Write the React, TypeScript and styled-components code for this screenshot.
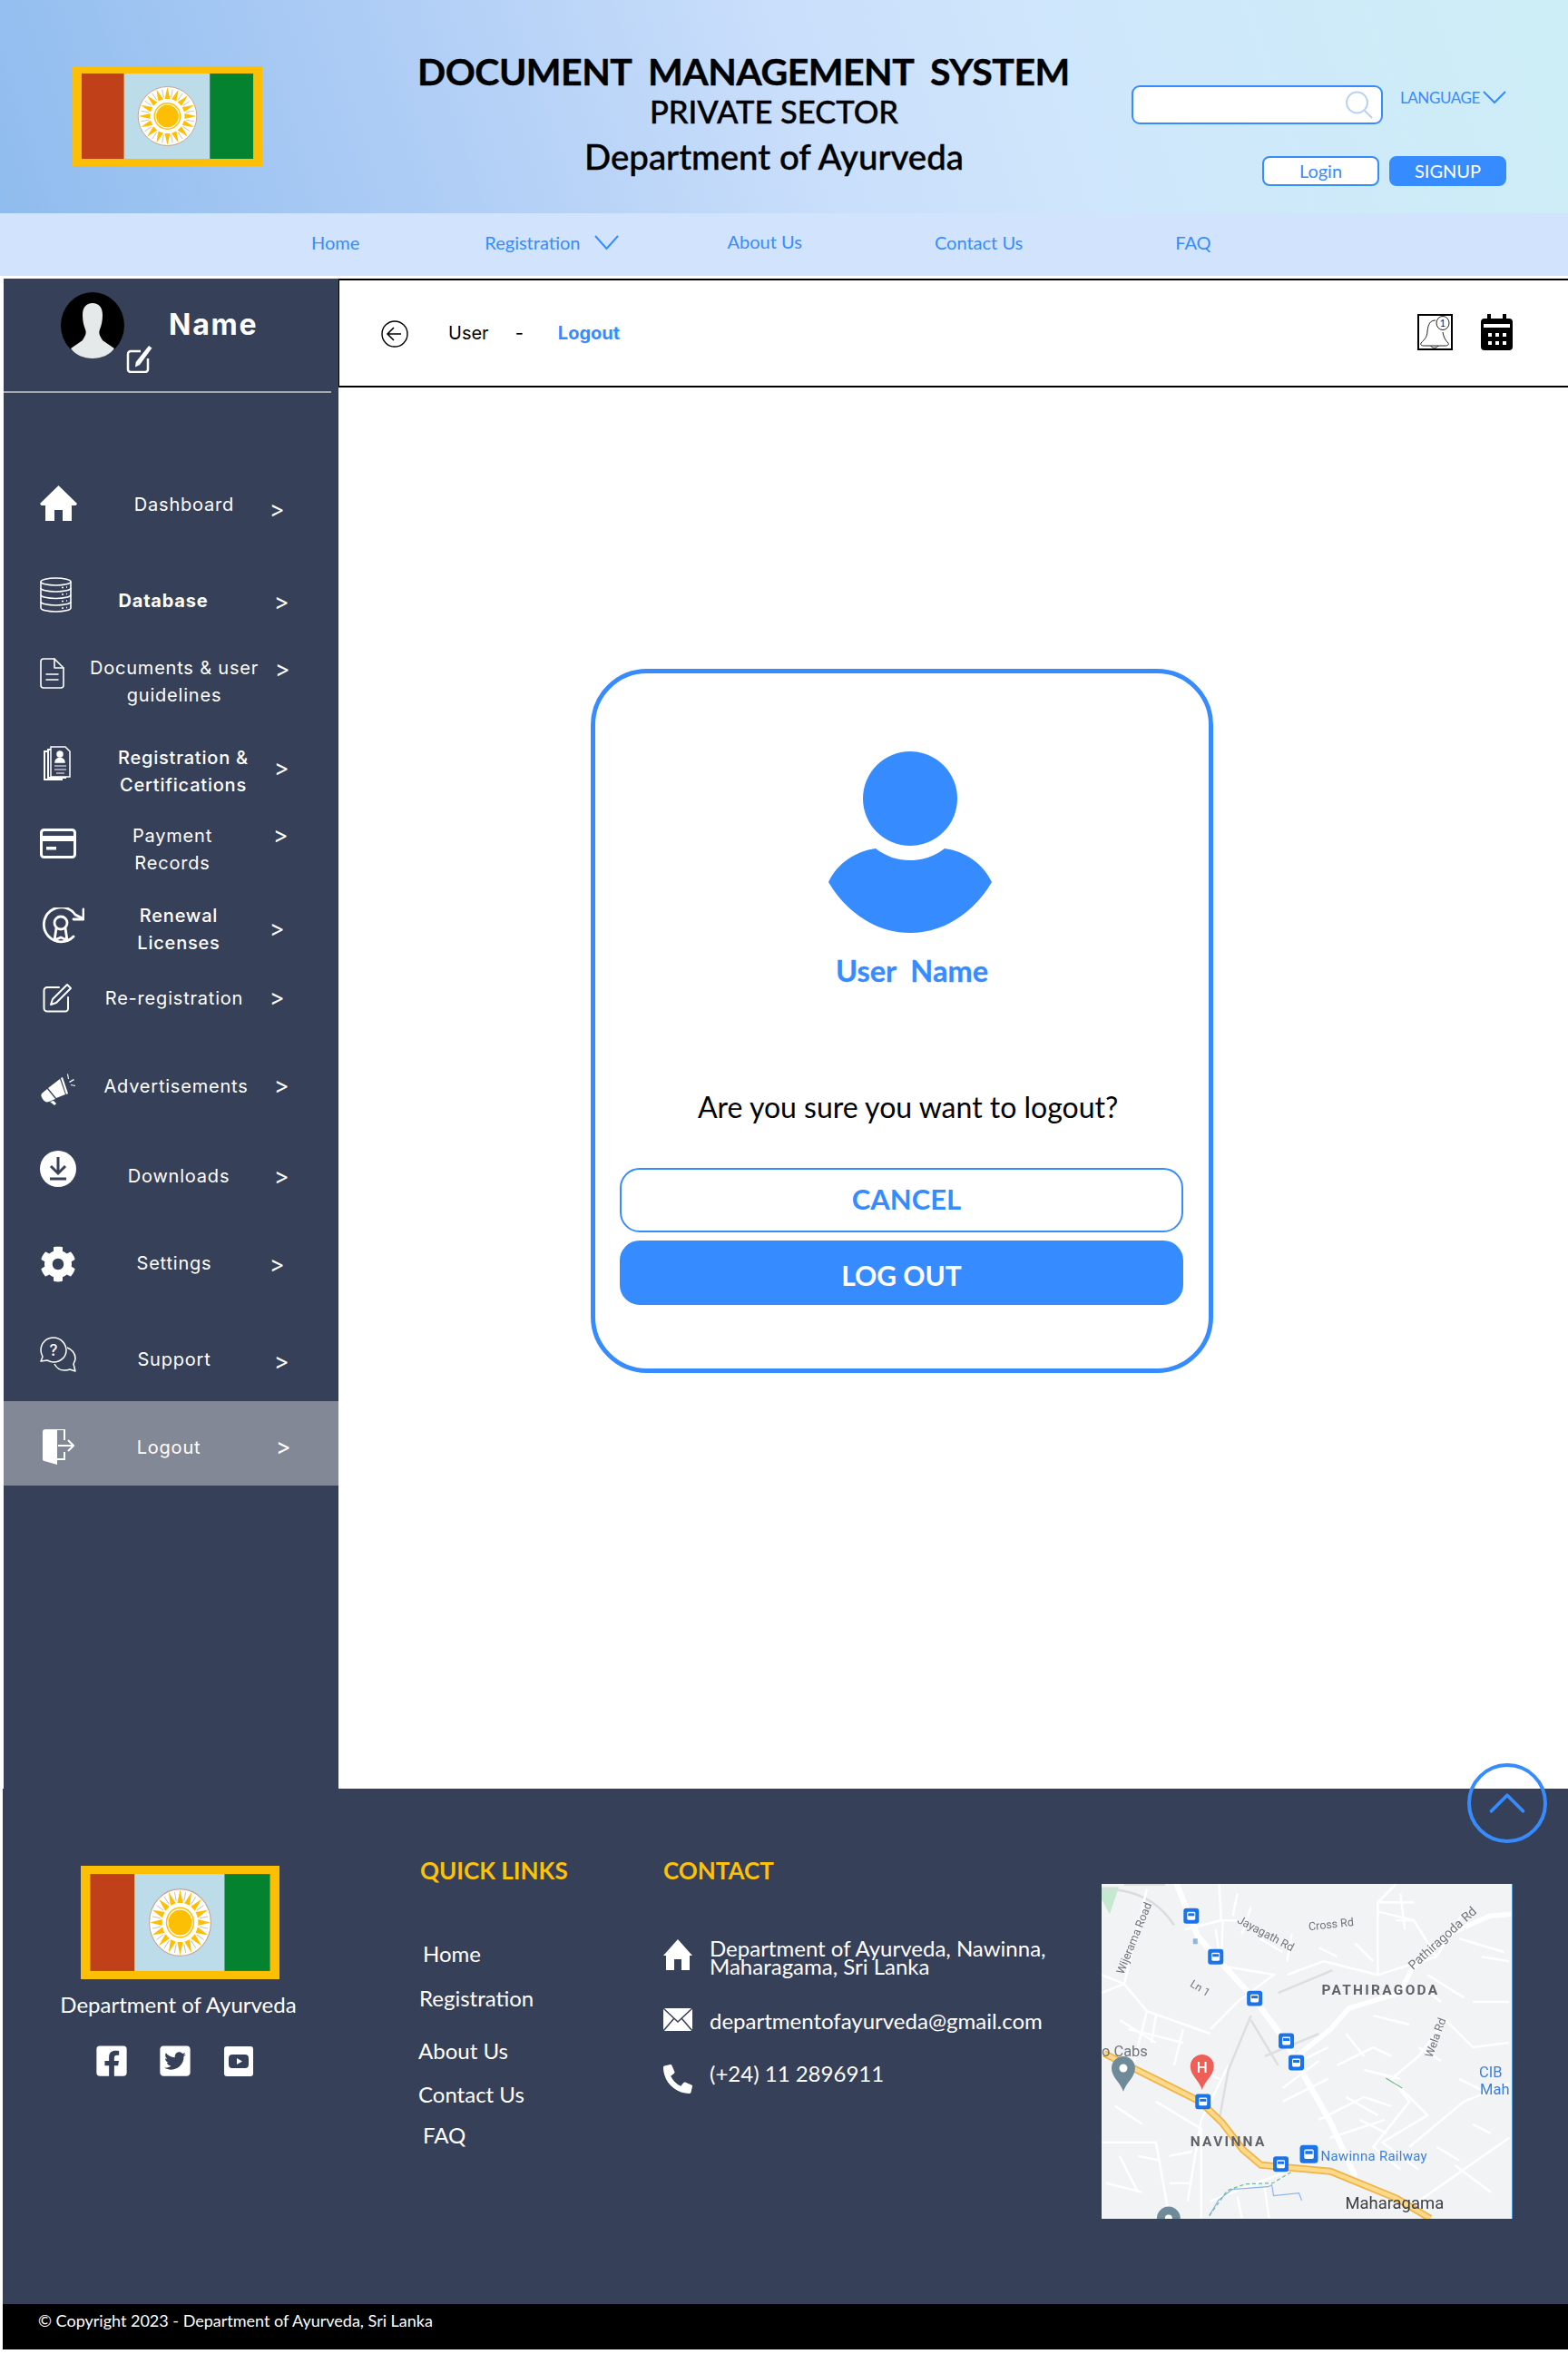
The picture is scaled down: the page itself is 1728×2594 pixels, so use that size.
import React from 'react';
import styled, { createGlobalStyle } from 'styled-components';
import { FaCog, FaFacebookSquare, FaPhoneAlt, FaTwitterSquare } from 'react-icons/fa';
import { FiChevronUp } from 'react-icons/fi';

const BLUE = '#368cff';
const NAVY = '#364059';

const GlobalStyle = createGlobalStyle`
  html, body { margin: 0; padding: 0; background: #ffffff; }
  body { font-family: 'Lato', 'Liberation Sans', sans-serif; }
  * { box-sizing: border-box; }
`;

const Page = styled.div`
  width: 1728px;
  height: 2594px;
  overflow: hidden;
`;

/* header */
const Header = styled.header`
  display: flex;
  height: 235px;
  background: linear-gradient(72deg, #8fbcee 0%, #b2cff6 30%, #cadffb 52%, #cfe7fb 70%, #cdeef6 100%);
`;

const FlagSlot = styled.div`
  margin: 73px 0 0 80px;
  width: 209px;
  height: 110px;
`;

const TitleBlock = styled.div`
  margin: 57px 0 0 171px;
  width: 786px;
  color: #000000;
  text-align: center;
`;

const TitleLine = styled.div<{ $size: number; $weight: number; $shift?: number; $top?: number; $track?: number }>`
  margin-top: ${(p) => p.$top ?? 0}px;
  margin-right: ${(p) => p.$shift ?? 0}px;
  font-size: ${(p) => p.$size}px;
  font-weight: ${(p) => p.$weight};
  letter-spacing: ${(p) => p.$track ?? 0}px;
  line-height: 44px;
  white-space: pre;
  -webkit-text-stroke: 0.4px #000000;
`;

const HeaderRight = styled.div`
  margin: 94px 0 0 1px;
  width: 413px;
`;

const SearchRow = styled.div`
  display: flex;
`;

const SearchBox = styled.div`
  display: flex;
  align-items: center;
  justify-content: flex-end;
  width: 278px;
  height: 43px;
  padding-right: 8px;
  border: 2px solid ${BLUE};
  border-radius: 9px;
  background: #ffffff;
  color: #b7d2f4;
`;

const LanguageLink = styled.div`
  display: flex;
  align-items: center;
  gap: 3px;
  height: 20px;
  margin: 3px 0 0 19px;
  color: ${BLUE};
  font-size: 17px;
  letter-spacing: -0.4px;
`;

const AuthRow = styled.div`
  display: flex;
  justify-content: flex-end;
  gap: 11px;
  margin-top: 35px;
`;

const AuthButton = styled.button<{ $filled?: boolean }>`
  width: 129px;
  height: 33px;
  padding: 0 0 2px;
  border: 2px solid ${BLUE};
  border-radius: 8px;
  background: ${(p) => (p.$filled ? BLUE : '#ffffff')};
  color: ${(p) => (p.$filled ? '#ffffff' : BLUE)};
  font-family: inherit;
  font-size: 20px;
  line-height: 1;
`;

/* top nav */
const TopNav = styled.nav`
  display: flex;
  align-items: center;
  height: 69px;
  padding: 0 0 5px 343px;
  background: #d2e4fd;
  color: ${BLUE};
  font-size: 20px;
`;

const TopNavItem = styled.a<{ $gap?: number; $lift?: number }>`
  display: flex;
  align-items: center;
  margin-left: ${(p) => p.$gap ?? 0}px;
  margin-bottom: ${(p) => p.$lift ?? 0}px;
`;

const TopNavCaret = styled.span`
  display: flex;
  margin-left: 15px;
`;

/* body */
const Workspace = styled.div`
  display: flex;
  height: 1664px;
  margin-top: 3px;
  padding-left: 4px;
`;

const Sidebar = styled.aside`
  flex: 0 0 369px;
  background: ${NAVY};
  color: #ffffff;
`;

const Profile = styled.div`
  display: flex;
  height: 124px;
  margin-right: 8px;
  padding: 15px 0 0 63px;
`;

const AvatarOval = styled.div`
  width: 70px;
  height: 73px;
`;

const AvatarEdit = styled.span`
  display: flex;
  height: 30px;
  margin: 59px 0 0 2px;
`;

const ProfileName = styled.div`
  margin: 16px 0 0 18px;
  font-family: 'Inter', 'Liberation Sans', sans-serif;
  font-size: 32px;
  font-weight: 700;
  letter-spacing: 1.8px;
  line-height: 40px;
`;

const ProfileRule = styled.hr`
  width: 361px;
  height: 2px;
  margin: 0 0 87px;
  border: 0;
  background: #a6a9b2;
`;

const SideRow = styled.a<{ $h: number; $active?: boolean }>`
  display: grid;
  grid-template-columns: 96px 190px 1fr;
  align-items: start;
  height: ${(p) => p.$h}px;
  background: ${(p) => (p.$active ? '#838896' : 'transparent')};
`;

const SideIcon = styled.span<{ $x: number; $y: number; $w: number; $h: number }>`
  display: flex;
  width: ${(p) => p.$w}px;
  height: ${(p) => p.$h}px;
  margin: ${(p) => p.$y}px 0 0 ${(p) => p.$x}px;
  svg { width: 100%; height: 100%; display: block; }
`;

const SideLabel = styled.span<{ $dx: number; $y: number; $weight?: number }>`
  display: block;
  width: 190px;
  margin: ${(p) => p.$y}px 0 0 ${(p) => p.$dx}px;
  font-family: 'Inter', 'Liberation Sans', sans-serif;
  font-size: 20px;
  font-weight: ${(p) => p.$weight ?? 400};
  line-height: 30px;
  letter-spacing: 0.8px;
  text-align: center;
  white-space: pre;
`;

const SideChevron = styled.span<{ $x: number; $y: number }>`
  display: block;
  margin: ${(p) => p.$y}px 0 0 ${(p) => p.$x - 4}px;
  font-family: 'Inter', 'Liberation Sans', sans-serif;
  font-size: 25px;
  line-height: 24px;
`;

const Content = styled.main`
  flex: 1;
  border-top: 2px solid #000000;
`;

const Breadcrumb = styled.div`
  display: flex;
  align-items: center;
  height: 118px;
  padding: 0 61px 0 46px;
  border-left: 1.5px solid #000000;
  border-bottom: 2px solid #000000;
  font-family: 'Inter', 'Liberation Sans', sans-serif;
  font-size: 20px;
  color: #000000;
`;

const CrumbIcon = styled.span`
  display: flex;
  margin: 2px 44px 0 0;
`;

const CrumbText = styled.span<{ $gap?: number; $accent?: boolean }>`
  margin: 0 0 0 ${(p) => p.$gap ?? 0}px;
  color: ${(p) => (p.$accent ? BLUE : '#000000')};
  font-weight: ${(p) => (p.$accent ? 700 : 400)};
`;

const CrumbTools = styled.div`
  display: flex;
  gap: 31px;
  margin: -3px 0 0 auto;
`;

const LogoutCard = styled.section`
  display: flex;
  flex-direction: column;
  align-items: flex-start;
  width: 686px;
  height: 776px;
  margin: 310px 0 0 278px;
  padding: 86px 0 0 27px;
  border: 5px solid ${BLUE};
  border-radius: 62px;
  background: #ffffff;
`;

const UserIconSlot = styled.div`
  display: flex;
  margin-left: 230px;
`;

const UserName = styled.div`
  margin: 22px 0 0 238px;
  color: ${BLUE};
  font-size: 32.5px;
  font-weight: 700;
  line-height: 40px;
  white-space: pre;
  -webkit-text-stroke: 0.3px ${BLUE};
`;

const Question = styled.div`
  margin: 110px 0 0 86px;
  color: #000000;
  font-size: 32px;
  line-height: 40px;
`;

const CardButton = styled.button<{ $filled?: boolean }>`
  width: 621px;
  height: 71px;
  margin-top: ${(p) => (p.$filled ? 9 : 47)}px;
  padding: ${(p) => (p.$filled ? '4px 0 0 0' : '0 0 3px 11px')};
  border: 2px solid ${BLUE};
  border-radius: 22px;
  background: ${(p) => (p.$filled ? BLUE : '#ffffff')};
  color: ${(p) => (p.$filled ? '#ffffff' : BLUE)};
  font-family: inherit;
  font-size: ${(p) => (p.$filled ? 30 : 31)}px;
  font-weight: 700;
`;

/* footer */
const Footer = styled.footer`
  position: relative;
  display: flex;
  height: 568px;
  margin-left: 3px;
  background: ${NAVY};
  color: #ffffff;
`;

const ScrollTop = styled.button`
  position: absolute;
  top: -28px;
  right: 23px;
  display: flex;
  align-items: center;
  justify-content: center;
  width: 88px;
  height: 88px;
  padding: 0;
  border: 4px solid ${BLUE};
  border-radius: 50%;
  background: transparent;
  color: ${BLUE};
`;

const BrandColumn = styled.div`
  display: flex;
  flex-direction: column;
  align-items: center;
  width: 390px;
  padding: 85px 0 0 0;
  font-size: 24px;
`;

const FooterFlag = styled.div`
  width: 219px;
  height: 125px;
`;

const BrandName = styled.div`
  margin: 12px 3px 0 0;
  line-height: 32px;
  white-space: nowrap;
`;

const SocialRow = styled.div`
  display: flex;
  gap: 32px;
  margin: 27px 11px 0 0;
`;

const QuickColumn = styled.div`
  width: 338px;
  padding: 70px 0 0 70px;
  font-size: 24px;
`;

const FooterHeading = styled.h3`
  margin: 0;
  color: #fcc10a;
  font-size: 26px;
  font-weight: 700;
  line-height: 40px;
  white-space: nowrap;
`;

const QuickLink = styled.a<{ $x: number; $top: number }>`
  display: block;
  margin: ${(p) => p.$top}px 0 0 ${(p) => p.$x}px;
  line-height: 32px;
`;

const ContactColumn = styled.div`
  width: 483px;
  padding-top: 70px;
  font-size: 24px;
`;

const ContactRow = styled.div<{ $top: number }>`
  display: flex;
  align-items: flex-start;
  gap: 19px;
  margin-top: ${(p) => p.$top}px;
`;

const ContactText = styled.div<{ $top?: number }>`
  margin-top: ${(p) => p.$top ?? 0}px;
  line-height: 20px;
  white-space: pre;
`;

const ContactIcon = styled.span`
  display: flex;
  flex: 0 0 32px;
`;

const MapSlot = styled.div`
  width: 453px;
  height: 369px;
  margin-top: 105px;
  background: #f2f3f5;
  border-right: 1px solid #4a9ad8;
`;

const Copyright = styled.div`
  display: flex;
  align-items: center;
  height: 50px;
  margin-left: 3px;
  padding: 0 0 14px 39px;
  background: #000000;
  color: #ffffff;
  font-size: 18px;
`;

const FlagMark: React.FC = () => (
  <svg width="100%" height="100%" viewBox="0 0 210 110" preserveAspectRatio="none">
    <rect width="210" height="110" fill="#fdbf05" />
    <rect x="10" y="8" width="47" height="94" fill="#c0401a" />
    <rect x="57" y="8" width="95" height="94" fill="#bddcea" />
    <rect x="152" y="8" width="48" height="94" fill="#05822f" />
    <circle cx="105" cy="55" r="32.5" fill="#ffffff" stroke="#c2a596" strokeWidth="1" />
    {Array.from({ length: 16 }).map((_, i) => (
      <polygon
        key={i}
        points="102,36 105,23 108,36"
        fill="#fdbf05"
        transform={`rotate(${i * 22.5} 105 55)`}
      />
    ))}
    {Array.from({ length: 16 }).map((_, i) => (
      <line
        key={i}
        x1="105"
        y1="34"
        x2="105"
        y2="25"
        stroke="#b9b2a8"
        strokeWidth="0.7"
        transform={`rotate(${i * 22.5 + 11.25} 105 55)`}
      />
    ))}
    <circle cx="105" cy="55" r="15" fill="#fdbf05" />
    <circle cx="105" cy="55" r="13" fill="#fdbf05" stroke="#ffffff" strokeWidth="1.2" />
  </svg>
);

const HomeIcon = () => (
  <svg viewBox="0 0 41 39" fill="#fff">
    <path d="M20.500 0L41 20l-1.500 2H35v17H25V27h-9v12H6V22H1.500L0 20z" />
  </svg>
);

const CardIcon = () => (
  <svg viewBox="0 0 40 33" fill="#fff">
    <rect x="1.500" y="1.500" width="37" height="30" rx="3" fill="none" stroke="#fff" strokeWidth="3" />
    <rect x="2" y="8" width="36" height="6" />
    <rect x="7" y="20" width="11" height="3.500" />
  </svg>
);

const DatabaseIcon = () => (
  <svg viewBox="0 0 35 39" fill="none" stroke="#fff" strokeWidth="1.6">
    <ellipse cx="17.5" cy="5" rx="16.5" ry="4" />
    <path d="M1 5v29c0 2.2 7.4 4 16.5 4S34 36.200 34 34V5" />
    <path d="M1 12c0 2.200 7.400 4 16.500 4S34 14.200 34 12M1 19.500c0 2.200 7.400 4 16.500 4S34 21.700 34 19.500M1 27c0 2.200 7.400 4 16.500 4S34 29.200 34 27" />
    <path d="M24 11.500h2M29 11h1M24 19h2M29 18.500h1M24 26.500h2M29 26h1M24 34h2M29 33.500h1" />
  </svg>
);

const DocumentIcon = () => (
  <svg viewBox="0 0 27 34" fill="none" stroke="#fff" strokeWidth="1.6" strokeLinejoin="round" strokeLinecap="round">
    <path d="M4 1h12l10 10v19a3 3 0 0 1-3 3H4a3 3 0 0 1-3-3V4a3 3 0 0 1 3-3z" />
    <path d="M16 1v10h10M7 18h13M7 24h13" />
  </svg>
);

const CertificateIcon = () => (
  <svg viewBox="0 0 30 38" fill="none" stroke="#fff" strokeWidth="1.500">
    <path d="M8 1h16l5 5v28H8z" />
    <path d="M8 4H5v31h19v-1M4 6H1v31h19v-2" strokeWidth="2" />
    <circle cx="18" cy="9" r="3" fill="#fff" />
    <path d="M13 18c0-6 10-6 10 0z" fill="#fff" />
    <path d="M12 22h13M12 26h13M14 30h9" strokeWidth="1" />
  </svg>
);

const RenewalIcon = () => (
  <svg viewBox="0 0 48 40" fill="none" stroke="#fff" strokeWidth="2.800" strokeLinecap="round" strokeLinejoin="round">
    <path d="M36 32a19 19 0 1 1 2-24l8 4" />
    <path d="M47 2v11H36" />
    <circle cx="22" cy="17" r="7" />
    <path d="M17 23l-2 13 7-3 7 3-2-13" />
  </svg>
);

const EditIcon = () => (
  <svg viewBox="0 0 33 33" fill="none" stroke="#fff" strokeWidth="2" strokeLinecap="round" strokeLinejoin="round">
    <path d="M18 5H5a3.500 3.500 0 0 0-3.500 3.500V28A3.500 3.500 0 0 0 5 31.500h20a3 3 0 0 0 3-3V16" />
    <path d="M27 2l4 4-16 16-6 2 2-6z" />
  </svg>
);

const AvatarEditIcon = () => (
  <svg width="29" height="30" viewBox="0 0 29 30">
    <path d="M16 6H5a3 3 0 0 0-3 3v17a3 3 0 0 0 3 3h16a3 3 0 0 0 3-3V14" fill="none" stroke="#fff" strokeWidth="2.500" />
    <path d="M25 0l3.500 2.500L15 21l-5 2.500.7-5.500z" fill="#fff" />
  </svg>
);

const MegaphoneIcon = () => (
  <svg viewBox="0 0 39 35" fill="#fff">
    <path d="M1 22l6-5 9 11-7 3c-3 1-5 0-7-3s-2-4-1-6z" />
    <path d="M8 16l13-10 6 17-10 4z" />
    <path d="M22 5l2-1 6 18-2 1z" />
    <path d="M10 31l4-1 3 3-2 2z" />
    <path d="M29 1l1-1 1 6-1 0zM36 6l1 1-5 3-1-1zM38 13v1l-5-1v-1z" />
  </svg>
);

const DownloadIcon = () => (
  <svg viewBox="0 0 40 40">
    <circle cx="20" cy="20" r="20" fill="#fff" />
    <path d="M20 7v17M12 17l8 8 8-8M11 31h18" fill="none" stroke={NAVY} strokeWidth="3" />
  </svg>
);

const SupportIcon = () => (
  <svg viewBox="0 0 40 39" fill="none" stroke="#fff" strokeWidth="1.500" strokeLinejoin="round">
    <path d="M15 1C7 1 1 7 1 15c0 3 1 5 2 7l-2 5 7-1c2 1 4 2 7 2 8 0 14-6 14-13S23 1 15 1z" />
    <path d="M30 12c5 2 9 6 9 12 0 2-1 4-2 6l2 8-6-2c-2 1-4 1-6 1-5 0-9-3-11-7" />
    <text x="15" y="21" fill="#fff" stroke="none" fontSize="17" fontWeight="500" textAnchor="middle" fontFamily="Inter">?</text>
  </svg>
);

const DoorIcon = () => (
  <svg viewBox="0 0 36 40">
    <path d="M1 3c0-2 1-3 3-3h14l-1 1v38l-14-4c-1 0-2-1-2-2z" fill="#fff" />
    <path d="M4 0h21v12M25 25v8H17" fill="none" stroke="#fff" strokeWidth="2" />
    <path d="M18 18h16M29 12l6 6-6 6" fill="none" stroke="#fff" strokeWidth="2" />
  </svg>
);

const sideItems = [
  { label: 'Dashboard', h: 105, icon: <HomeIcon />, ix: 40, iy: 15, iw: 41, ih: 39, dx: 8, y: 21, cx: 11, cy: 29 },
  { label: 'Database', h: 90, icon: <DatabaseIcon />, ix: 40, iy: 11, iw: 35, ih: 39, dx: -15, y: 22, cx: 16, cy: 26, weight: 700 },
  { label: 'Documents & user\nguidelines', h: 100, icon: <DocumentIcon />, ix: 40, iy: 10, iw: 27, ih: 34, dx: -3, y: 6, cx: 17, cy: 10 },
  { label: 'Registration &\nCertifications', h: 90, icon: <CertificateIcon />, ix: 44, iy: 7, iw: 30, ih: 38, dx: 7, y: 5, cx: 16, cy: 19, weight: 500 },
  { label: 'Payment\nRecords', h: 85, icon: <CardIcon />, ix: 40, iy: 8, iw: 40, ih: 33, dx: -5, y: 1, cx: 15, cy: 3 },
  { label: 'Renewal\nLicenses', h: 85, icon: <RenewalIcon />, ix: 41, iy: 10, iw: 48, ih: 40, dx: 2, y: 4, cx: 11, cy: 21, weight: 500 },
  { label: 'Re-registration', h: 95, icon: <EditIcon />, ix: 43, iy: 8, iw: 33, ih: 33, dx: -3, y: 10, cx: 11, cy: 12 },
  { label: 'Advertisements', h: 90, icon: <MegaphoneIcon />, ix: 41, iy: 13, iw: 39, ih: 35, dx: -1, y: 12, cx: 16, cy: 14 },
  { label: 'Downloads', h: 105, icon: <DownloadIcon />, ix: 40, iy: 8, iw: 40, ih: 40, dx: 2, y: 21, cx: 16, cy: 24 },
  { label: 'Settings', h: 100, icon: <FaCog />, ix: 40, iy: 8, iw: 40, ih: 40, dx: -3, y: 12, cx: 11, cy: 16 },
  { label: 'Support', h: 79, icon: <SupportIcon />, ix: 40, iy: 8, iw: 40, ih: 39, dx: -3, y: 18, cx: 16, cy: 23 },
  { label: 'Logout', h: 93, icon: <DoorIcon />, ix: 42, iy: 31, iw: 36, ih: 40, dx: -9, y: 36, cx: 18, cy: 38, active: true },
];

const BusStop: React.FC<{ x: number; y: number; s?: number }> = ({ x, y, s = 17 }) => (
  <g transform={`translate(${x - s / 2} ${y - s / 2}) scale(${s / 17})`}>
    <rect width="17" height="17" rx="3" fill="#1a73e8" />
    <rect x="4" y="4" width="9" height="9" rx="1.500" fill="#ffffff" />
    <rect x="5" y="5.500" width="7" height="3" fill="#1a73e8" />
  </g>
);

const MapDrawing: React.FC = () => (
  <svg width="452" height="369" viewBox="0 0 453 369" style={{ display: 'block', filter: 'blur(0.4px)' }}>
    <rect width="453" height="369" fill="#f2f3f5" />
    <path d="M0 3h19l-10 30-9-16z" fill="#c5e8d0" />
    <g fill="none" stroke="#ffffff" strokeWidth="2.500" strokeLinejoin="round">
      <path d="M70 0L25 0M0 5c50 0 70 25 80 40" stroke="#d9dbdd" />
      <path d="M50 5L25 110 0 100M25 110l25 30 70 25M50 140l-15 60-35-10M25 110l-25 10" />
      <path d="M130 0l2 40-40 10M149 40h-15l-2 50 60 10M132 90l-6-40M190 100l-40 30-30 30" />
      <path d="M205 100l40-15 60 15 65-20 30-50M305 100v-80l20-20M305 20h40M370 80l-25-40h-20M345 40l-40-10" />
      <path d="M140 200l-30 60-15 90M60 240l50 30 0 99M0 285h60l15 84M20 300l20 40" />
      <path d="M165 145l-25 60-10 55 20 30M165 150l30 50M180 190l60-25M195 120l60-25" stroke="#dcdee0" />
      <path d="M380 150l-30 40-30 25 20 25-40 50 30 25M320 215l40 40-50 30 40 30M340 290l60-50 50-20" />
      <path d="M380 150l30 30 40-5M395 60l50 15M410 130l40 0M260 200l40-20 20 10M240 260l50-25 30 10" />
      <path d="M253 280l60-20M350 350l100-70M390 310l40 30M120 350l90-35M180 335l5 34M150 345l5 24" />
      <path d="M200 225l40-30M200 240l50-25M210 200l40-20M90 160l-10 40M30 160l60 15M100 200l30 15" />
      <path d="M20 150l40 25M60 145l-5 30M15 245l30 20M40 300l25 5M75 300l25-5M75 330h25M5 330l40 10" />
      <path d="M150 10l-5 25M165 25l-10 30M175 60l25 15M210 55l-5 30M240 70l20 10M280 65l20 20M330 10l5 40" />
      <path d="M350 110l25 20M360 100l40 25M420 80l30 5M300 145l40 10M270 165l20 25M290 205l40 10" />
      <path d="M270 235l35 20M285 260l30 15M350 180l25 15M395 215l30 15M370 290l25 15M410 265l20 10" />
    </g>
    <g fill="none" stroke="#ffffff" strokeLinejoin="round" strokeLinecap="round">
      <path d="M83 0l23 57 20 23 43 47 34 46 16 30 34 60 26 57" strokeWidth="6.500" />
      <path d="M453 33l-24 2-50 22-36 36-14 27-56 17-20 23-34 27" strokeWidth="5.500" />
    </g>
    <g fill="none" strokeLinejoin="round">
      <path d="M3 187l40 20 66 33 24 23 23 30 20 17 77 7 73 30 37 22" stroke="#f0b448" strokeWidth="8" />
      <path d="M3 187l40 20 66 33 24 23 23 30 20 17 77 7 73 30 37 22" stroke="#fdd98a" strokeWidth="4.500" />
    </g>
    <path d="M119 366l10-17 15-12 40-3 4-2 2 12 28-3 3 8" fill="none" stroke="#8db4ee" strokeWidth="1.200" />
    <path d="M119 366l20-28 20-7 30-1 20-12" fill="none" stroke="#6fb98a" strokeWidth="1.200" strokeDasharray="4 3" />
    <path d="M314 214l18 11" stroke="#6fb98a" strokeWidth="1.200" />
    <rect x="101" y="60" width="5" height="6" fill="#8db4ee" />
    <g fontFamily="Roboto, sans-serif" fill="#70757a">
      <text transform="translate(24 100) rotate(-68)" fontSize="12.500">Wijerama Road</text>
      <text transform="translate(149 42) rotate(28)" fontSize="12.500">Jayagath Rd</text>
      <text transform="translate(229 51) rotate(-6)" fontSize="12.500">Cross Rd</text>
      <text transform="translate(344 95) rotate(-42)" fontSize="14">Pathiragoda Rd</text>
      <text transform="translate(97 112) rotate(32)" fontSize="12">Ln 1</text>
      <text transform="translate(365 192) rotate(-70)" fontSize="12.500">Wela Rd</text>
      <text x="0" y="190" fontSize="16.500">o Cabs</text>
      <text x="243" y="122" fontSize="15.500" fontWeight="700" letterSpacing="2.300" fill="#5f6368">PATHIRAGODA</text>
      <text x="98" y="289" fontSize="15.500" fontWeight="700" letterSpacing="2.300" fill="#5f6368">NAVINNA</text>
      <text x="242" y="305" fontSize="15" letterSpacing="0.300" fill="#3a7fe0">Nawinna Railway</text>
      <text x="269" y="358" fontSize="18.500" fill="#3c4043">Maharagama</text>
      <text x="417" y="213" fontSize="16.500" fill="#3a7fe0">CIB</text>
      <text x="418" y="232" fontSize="16.500" fill="#3a7fe0">Mah</text>
    </g>
    <BusStop x={99} y={35} />
    <BusStop x={126} y={80} />
    <BusStop x={169} y={126} />
    <BusStop x={204} y={173} />
    <BusStop x={215} y={197} />
    <BusStop x={112} y={240} />
    <BusStop x={198} y={309} />
    <BusStop x={229} y={298} s={20} />
    <path d="M24 229c-3-10-13-16-13-26a13 13 0 0 1 26 0c0 10-10 16-13 26z" fill="#6f8a99" />
    <circle cx="24" cy="203" r="4.500" fill="#ffffff" />
    <path d="M111 227c-3-10-13-16-13-26a13 13 0 0 1 26 0c0 10-10 16-13 26z" fill="#ee5f57" />
    <text x="111" y="208" fill="#ffffff" fontSize="17" fontWeight="500" textAnchor="middle" fontFamily="Roboto, sans-serif">H</text>
    <circle cx="74" cy="369" r="13" fill="#6f8a99" />
    <circle cx="74" cy="369" r="4" fill="#ffffff" />
  </svg>
);

const BellBox = () => (
  <svg width="39" height="40" viewBox="0 0 39 40" fill="none">
    <rect x="1" y="1" width="37" height="38" fill="#fff" stroke="#000" strokeWidth="2" />
    <path d="M20 7c-6 0-8 4-9 12 0 6-3 9-7 13-1 2 1 3 3 3h24c2 0 4-1 3-3-3-3-5-6-6-12" stroke="#222" strokeWidth="1" />
    <path d="M15 35c0 3 7 3 8 0" stroke="#222" strokeWidth="1" />
    <ellipse cx="28" cy="10" rx="7" ry="7.500" fill="#fff" stroke="#222" strokeWidth="1" />
    <text x="28" y="14" fontSize="11" textAnchor="middle" fill="#222" fontFamily="Lato">1</text>
  </svg>
);

const CalendarIcon = () => (
  <svg width="35" height="40" viewBox="0 0 35 40">
    <rect y="5" width="35" height="35" rx="4" fill="#000" />
    <rect x="7" y="0" width="4" height="8" fill="#000" />
    <rect x="24" y="0" width="4" height="8" fill="#000" />
    <rect x="3" y="11" width="29" height="4" fill="#fff" />
    {[0, 1, 2].map((c) =>
      [0, 1].map((r) => <rect key={`${c}${r}`} x={8 + c * 8} y={21 + r * 9} width="4" height="4" fill="#fff" />),
    )}
  </svg>
);

const App: React.FC = () => (
  <Page>
    <GlobalStyle />
    <Header>
      <FlagSlot>
        <FlagMark />
      </FlagSlot>
      <TitleBlock>
        <TitleLine $size={41} $weight={700} $shift={70} $track={-0.5}>{'DOCUMENT  MANAGEMENT  SYSTEM'}</TitleLine>
        <TitleLine $size={34.5} $weight={500}>PRIVATE SECTOR</TitleLine>
        <TitleLine $size={38.4} $weight={500} $top={5}>Department of Ayurveda</TitleLine>
      </TitleBlock>
      <HeaderRight>
        <SearchRow>
          <SearchBox>
            <svg width="32" height="32" viewBox="0 0 32 32" fill="none" stroke="currentColor" strokeWidth="2">
              <circle cx="13.500" cy="13" r="11.500" />
              <path d="M22 22l8 8" />
            </svg>
          </SearchBox>
          <LanguageLink>
            LANGUAGE
            <svg width="26" height="15" viewBox="0 0 26 15" fill="none" stroke="currentColor" strokeWidth="2">
              <path d="M1 1l12 12L25 1" />
            </svg>
          </LanguageLink>
        </SearchRow>
        <AuthRow>
          <AuthButton>Login</AuthButton>
          <AuthButton $filled>SIGNUP</AuthButton>
        </AuthRow>
      </HeaderRight>
    </Header>

    <TopNav>
      <TopNavItem>Home</TopNavItem>
      <TopNavItem $gap={138}>
        Registration
        <TopNavCaret>
          <svg width="27" height="17" viewBox="0 0 27 17" fill="none" stroke="currentColor" strokeWidth="2">
            <path d="M1 1l12.500 14L26 1" />
          </svg>
        </TopNavCaret>
      </TopNavItem>
      <TopNavItem $gap={120} $lift={3}>About Us</TopNavItem>
      <TopNavItem $gap={146}>Contact Us</TopNavItem>
      <TopNavItem $gap={168}>FAQ</TopNavItem>
    </TopNav>

    <Workspace>
      <Sidebar>
        <Profile>
          <AvatarOval>
            <svg width="70" height="73" viewBox="0 0 70 73">
              <ellipse cx="35" cy="36.500" rx="35" ry="36.500" fill="#000" />
              <path d="M35 12c-7 0-11 5-11 13 0 6 1 11 3 16 2 5-1 8-3 12l-13 9c5 7 14 11 24 11s19-4 24-11l-13-9c-2-4-5-7-3-12 2-5 3-10 3-16 0-8-4-13-11-13z" fill="#e6e9e9" />
            </svg>
          </AvatarOval>
          <AvatarEdit>
            <AvatarEditIcon />
          </AvatarEdit>
          <ProfileName>Name</ProfileName>
        </Profile>
        <ProfileRule />
        {sideItems.map((item) => (
          <SideRow key={item.label} $h={item.h} $active={item.active}>
            <SideIcon $x={item.ix} $y={item.iy} $w={item.iw} $h={item.ih}>
              {item.icon}
            </SideIcon>
            <SideLabel $dx={item.dx} $y={item.y} $weight={item.weight}>
              {item.label}
            </SideLabel>
            <SideChevron $x={item.cx} $y={item.cy}>&gt;</SideChevron>
          </SideRow>
        ))}
      </Sidebar>

      <Content>
        <Breadcrumb>
          <CrumbIcon>
            <svg width="30" height="30" viewBox="0 0 30 30" fill="none" stroke="#000" strokeWidth="1.400">
              <circle cx="15" cy="15" r="14" />
              <path d="M22 15H8M14 8l-7 7 7 7" strokeWidth="1.600" />
            </svg>
          </CrumbIcon>
          <CrumbText>User</CrumbText>
          <CrumbText $gap={29}>-</CrumbText>
          <CrumbText $gap={38} $accent>Logout</CrumbText>
          <CrumbTools>
            <BellBox />
            <CalendarIcon />
          </CrumbTools>
        </Breadcrumb>

        <LogoutCard>
          <UserIconSlot>
            <svg width="180" height="200" viewBox="0 0 180 200" fill={BLUE}>
              <ellipse cx="90" cy="52" rx="52" ry="52" />
              <path d="M52 107c12 9 24 13 38 13s26-4 38-13c22 3 42 16 52 37-20 34-53 56-90 56S20 178 0 144c10-21 30-34 52-37z" />
            </svg>
          </UserIconSlot>
          <UserName>{'User  Name'}</UserName>
          <Question>Are you sure you want to logout?</Question>
          <CardButton>CANCEL</CardButton>
          <CardButton $filled>LOG OUT</CardButton>
        </LogoutCard>
      </Content>
    </Workspace>

    <Footer>
      <ScrollTop>
        <FiChevronUp size={70} strokeWidth={1.3} />
      </ScrollTop>
      <BrandColumn>
        <FooterFlag>
          <FlagMark />
        </FooterFlag>
        <BrandName>Department of Ayurveda</BrandName>
        <SocialRow>
          <FaFacebookSquare size={38} />
          <FaTwitterSquare size={38} />
          <svg width="38" height="38" viewBox="0 0 38 38">
            <rect x="3" y="3" width="32" height="33" rx="3" fill="#fff" />
            <rect x="8" y="12" width="22" height="15" rx="4" fill={NAVY} />
            <path d="M17 16l6 3.500-6 3.500z" fill="#fff" />
          </svg>
        </SocialRow>
      </BrandColumn>

      <QuickColumn>
        <FooterHeading>QUICK LINKS</FooterHeading>
        <QuickLink $x={3} $top={56}>Home</QuickLink>
        <QuickLink $x={-1} $top={17}>Registration</QuickLink>
        <QuickLink $x={-2} $top={26}>About Us</QuickLink>
        <QuickLink $x={-2} $top={16}>Contact Us</QuickLink>
        <QuickLink $x={3} $top={13}>FAQ</QuickLink>
      </QuickColumn>

      <ContactColumn>
        <FooterHeading>CONTACT</FooterHeading>
        <ContactRow $top={56}>
          <ContactIcon>
            <svg width="32" height="34" viewBox="0 0 32 34" fill="#fff">
              <path d="M16 0l16 18h-3v16h-9V22h-8v12H3V18H0z" />
            </svg>
          </ContactIcon>
          <ContactText>{'Department of Ayurveda, Nawinna,\nMaharagama, Sri Lanka'}</ContactText>
        </ContactRow>
        <ContactRow $top={36}>
          <ContactIcon>
            <svg width="32" height="25" viewBox="0 0 32 25">
              <rect width="32" height="25" fill="#fff" />
              <path d="M0 0l16 15L32 0M0 25l12-14M32 25L20 11" fill="none" stroke={NAVY} strokeWidth="1.500" />
            </svg>
          </ContactIcon>
          <ContactText $top={4}>departmentofayurveda@gmail.com</ContactText>
        </ContactRow>
        <ContactRow $top={37}>
          <ContactIcon>
            <FaPhoneAlt size={32} />
          </ContactIcon>
          <ContactText>(+24) 11 2896911</ContactText>
        </ContactRow>
      </ContactColumn>

      <MapSlot>
        <MapDrawing />
      </MapSlot>
    </Footer>

    <Copyright>© Copyright 2023 - Department of Ayurveda, Sri Lanka</Copyright>
  </Page>
);

export default App;
